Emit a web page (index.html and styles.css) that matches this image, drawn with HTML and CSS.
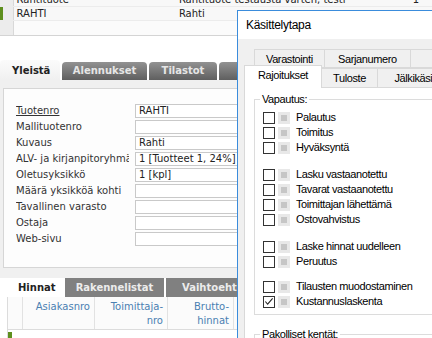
FILE: index.html
```html
<!DOCTYPE html>
<html lang="fi">
<head>
    <meta charset="UTF-8">
    <title>Tuote - Käsittelytapa</title>
    <link rel="stylesheet" href="styles.css">
</head>
<body>
    <div class="app">
        <div class="grid">
            <div class="grid-row">
                <span class="mark"></span>
                <span class="cell code">Rahtituote</span>
                <span class="cell name">Rahtituote testausta varten, testi</span>
                <span class="cell qty">1</span>
            </div>
            <div class="grid-row selected">
                <span class="mark"></span>
                <span class="cell code">RAHTI</span>
                <span class="cell name">Rahti</span>
                <span class="cell qty"></span>
            </div>
            <div class="grid-row last">
                <span class="mark"></span>
            </div>
        </div>

        <div class="tabs">
            <div class="tab active">Yleistä</div>
            <div class="tab" style="width:85px">Alennukset</div>
            <div class="tab" style="width:68px">Tilastot</div>
            <div class="tab" style="width:90px">Varastot</div>
        </div>
        <div class="panel">
            <div class="box">
                <div class="field"><label class="link">Tuotenro</label><div class="input">RAHTI</div></div>
                <div class="field"><label>Mallituotenro</label><div class="input"></div></div>
                <div class="field"><label>Kuvaus</label><div class="input">Rahti</div></div>
                <div class="field"><label>ALV- ja kirjanpitoryhmä</label><div class="input">1 [Tuotteet 1, 24%]</div></div>
                <div class="field"><label>Oletusyksikkö</label><div class="input">1 [kpl]</div></div>
                <div class="field"><label>Määrä yksikköä kohti</label><div class="input"></div></div>
                <div class="field"><label>Tavallinen varasto</label><div class="input"></div></div>
                <div class="field"><label>Ostaja</label><div class="input"></div></div>
                <div class="field"><label>Web-sivu</label><div class="input"></div></div>
            </div>
        </div>

        <div class="subtabs">
            <div class="subtab active">Hinnat</div>
            <div class="subtab" style="width:99px">Rakennelistat</div>
            <div class="subtab wide">Vaihtoehtoiset tuotteet</div>
        </div>
        <div class="table">
            <div class="thead">
                <div class="th first"></div>
                <div class="th" style="width:72px">Asiakasnro</div>
                <div class="th" style="width:73px">Toimittaja-<br>nro</div>
                <div class="th" style="width:66px">Brutto-<br>hinnat</div>
            </div>
            <div class="trow"><span class="bar"></span></div>
        </div>
    </div>

    <div class="dialog">
        <div class="title">Käsittelytapa</div>
        <div class="dlg-body">
            <div class="tabrow back">
                <div class="dtab" style="width:73px">Varastointi</div>
                <div class="dtab" style="width:90px">Sarjanumero</div>
                <div class="dtab" style="width:90px">Muut</div>
            </div>
            <div class="tabrow front">
                <div class="dtab current" style="width:78px">Rajoitukset</div>
                <div class="dtab" style="width:55px">Tuloste</div>
                <div class="dtab" style="width:90px">Jälkikäsittely</div>
            </div>
            <div class="page">
                <fieldset class="group">
                    <legend>Vapautus:</legend>
                    <div class="checks">
                        <div class="chk"><span class="box-c"></span><span class="box-g"></span>Palautus</div>
                        <div class="chk"><span class="box-c"></span><span class="box-g"></span>Toimitus</div>
                        <div class="chk"><span class="box-c"></span><span class="box-g"></span>Hyväksyntä</div>
                        <div class="chk sep"><span class="box-c"></span><span class="box-g"></span>Lasku vastaanotettu</div>
                        <div class="chk"><span class="box-c"></span><span class="box-g"></span>Tavarat vastaanotettu</div>
                        <div class="chk"><span class="box-c"></span><span class="box-g"></span>Toimittajan lähettämä</div>
                        <div class="chk"><span class="box-c"></span><span class="box-g"></span>Ostovahvistus</div>
                        <div class="chk sep"><span class="box-c"></span><span class="box-g"></span>Laske hinnat uudelleen</div>
                        <div class="chk"><span class="box-c"></span><span class="box-g"></span>Peruutus</div>
                        <div class="chk sep2"><span class="box-c"></span><span class="box-g"></span>Tilausten muodostaminen</div>
                        <div class="chk"><span class="box-c"><svg width="11" height="11" viewBox="0 0 11 11"><polyline points="1.5,5.5 4,8.5 9.5,2" fill="none" stroke="#222" stroke-width="1.2"/></svg></span><span class="box-g"></span>Kustannuslaskenta</div>
                    </div>
                </fieldset>
                <fieldset class="group second">
                    <legend>Pakolliset kentät:</legend>
                    <div class="checks"></div>
                </fieldset>
            </div>
        </div>
    </div>
</body>
</html>
```

FILE: styles.css
```css
* {
    box-sizing: border-box;
}
body {
    margin: 0;
    width: 432px;
    height: 338px;
    overflow: hidden;
    position: relative;
    background: #fff;
    font-family: "DejaVu Sans", Verdana, sans-serif;
    font-size: 10px;
    color: #222;
}
.app {
    width: 432px;
}

/* product grid */
.grid {
    margin-top: -7px;
}
.grid-row {
    display: flex;
    height: 14px;
    line-height: 14px;
    background: #f8f8f8;
    border-bottom: 1px solid #ececec;
    white-space: nowrap;
}
.grid-row.last {
    height: 15px;
    background: #fbfbfb;
    border-bottom: 1px solid #d4d4d4;
}
.mark {
    position: relative;
    width: 14px;
    background: #ececec;
    border-right: 1px solid #d8d8d8;
}
.selected .mark::before {
    content: "";
    position: absolute;
    left: 0;
    top: 0;
    bottom: 0;
    width: 3px;
    background: #5e8f1e;
}
.cell {
    overflow: hidden;
}
.code {
    width: 171px;
    padding-left: 3px;
}
.name {
    width: 242px;
}
.qty {
    width: 20px;
}

/* top tabs */
.tabs {
    display: flex;
    align-items: flex-end;
    gap: 2px;
    height: 20px;
    margin-top: 24px;
}
.tab {
    height: 18px;
    line-height: 18px;
    text-align: center;
    font-weight: bold;
    color: #e6e6e6;
    background: linear-gradient(#929292, #5f5f5f);
    border-radius: 4px 4px 0 0;
    white-space: nowrap;
    overflow: hidden;
}
.tab.active {
    width: 60px;
    height: 20px;
    line-height: 21px;
    text-align: left;
    padding-left: 12px;
    color: #222;
    background: linear-gradient(#fbfbfb, #f0f0f0);
}
.panel {
    background: #f0f0f0;
    padding: 8px 0 10px 3px;
}
.box {
    background: #fdfdfd;
    border: 1px solid #d6d6d6;
    border-right: none;
    padding: 15px 0 21px 12px;
}
.field {
    display: flex;
    height: 14px;
    margin-bottom: 2px;
}
.field:last-child {
    margin-bottom: 0;
}
.field label {
    width: 113px;
    margin-right: 6px;
    line-height: 14px;
    color: #333;
    white-space: nowrap;
    overflow: hidden;
}
.field label.link {
    text-decoration: underline;
}
.input {
    width: 200px;
    height: 14px;
    line-height: 12px;
    padding-left: 3px;
    background: #fff;
    border: 1px solid #c9c9c9;
    white-space: nowrap;
    overflow: hidden;
}

/* lower tabs and table */
.subtabs {
    display: flex;
    gap: 2px;
    height: 19px;
    padding-left: 8px;
}
.subtab {
    line-height: 19px;
    text-align: center;
    font-weight: bold;
    color: #ececec;
    background: #808080;
    white-space: nowrap;
    overflow: hidden;
}
.subtab.active {
    width: 55px;
    text-align: left;
    padding-left: 10px;
    color: #222;
    background: #fff;
}
.subtab.wide {
    width: 200px;
    text-align: left;
    padding-left: 16px;
}
.table {
    margin-left: 7px;
    border-left: 1px solid #dcdcdc;
}
.thead {
    display: flex;
    height: 33px;
    background: #fbfbfb;
    border-bottom: 1px solid #dcdcdc;
}
.th {
    padding: 3px 4px 0 0;
    line-height: 14px;
    text-align: right;
    color: #4a80b2;
    border-right: 1px solid #e2e2e2;
}
.th.first {
    width: 15px;
}
.trow {
    height: 10px;
    padding-top: 2px;
}
.bar {
    display: block;
    width: 4px;
    height: 8px;
    background: #5e8f1e;
}

/* dialog window */
.dialog {
    position: absolute;
    left: 237px;
    top: 10px;
    width: 260px;
    height: 340px;
    border: 1px solid #3a8cdc;
    background: #f0f0f0;
    font-family: "Liberation Sans", Arial, sans-serif;
    font-size: 11px;
    letter-spacing: -0.4px;
    color: #000;
}
.title {
    height: 28px;
    line-height: 28px;
    padding-left: 8px;
    font-size: 12px;
    letter-spacing: -0.3px;
    background: #fff;
}
.dlg-body {
    padding: 10px 0 0 6px;
}
.tabrow {
    display: flex;
}
.tabrow.back {
    height: 19px;
    margin-left: 10px;
}
.tabrow.front {
    height: 22px;
    margin-top: -3px;
    align-items: flex-end;
    position: relative;
    z-index: 1;
}
.dtab {
    height: 19px;
    line-height: 18px;
    text-align: center;
    background: #f0f0f0;
    border: 1px solid #d9d9d9;
    border-right: none;
    white-space: nowrap;
    overflow: hidden;
}
.tabrow.front .dtab {
    height: 19px;
    line-height: 18px;
    border-bottom: none;
}
.tabrow.front .dtab.current {
    height: 23px;
    line-height: 18px;
    margin-bottom: -1px;
    background: #fff;
    border-right: 1px solid #d9d9d9;
}
.tabrow.front .dtab.current + .dtab {
    border-left: none;
}
.page {
    height: 260px;
    background: #fff;
    border: 1px solid #d9d9d9;
    padding: 5px 0 0 9px;
}
.group {
    margin: 0;
    padding: 0;
    border: 1px solid #dcdcdc;
    min-width: 0;
}
.group legend {
    margin-left: 5px;
    padding: 0 2px;
    line-height: 13px;
}
.group.second {
    margin-top: 13px;
    height: 30px;
}
.checks {
    padding: 4px 0 5px 8px;
}
.chk {
    display: flex;
    align-items: center;
    height: 15px;
    line-height: 15px;
    white-space: nowrap;
}
.chk.sep {
    margin-top: 12px;
}
.chk.sep2 {
    margin-top: 10px;
}
.box-c {
    display: flex;
    align-items: center;
    justify-content: center;
    width: 12px;
    height: 12px;
    border: 1px solid #333;
    background: #fff;
}
.box-g {
    width: 12px;
    height: 12px;
    margin: 0 6px 0 3px;
    background: #e8e8e8;
    border: 3px solid #e8e8e8;
    box-shadow: inset 0 0 0 4px #c6c6c6;
}
```
